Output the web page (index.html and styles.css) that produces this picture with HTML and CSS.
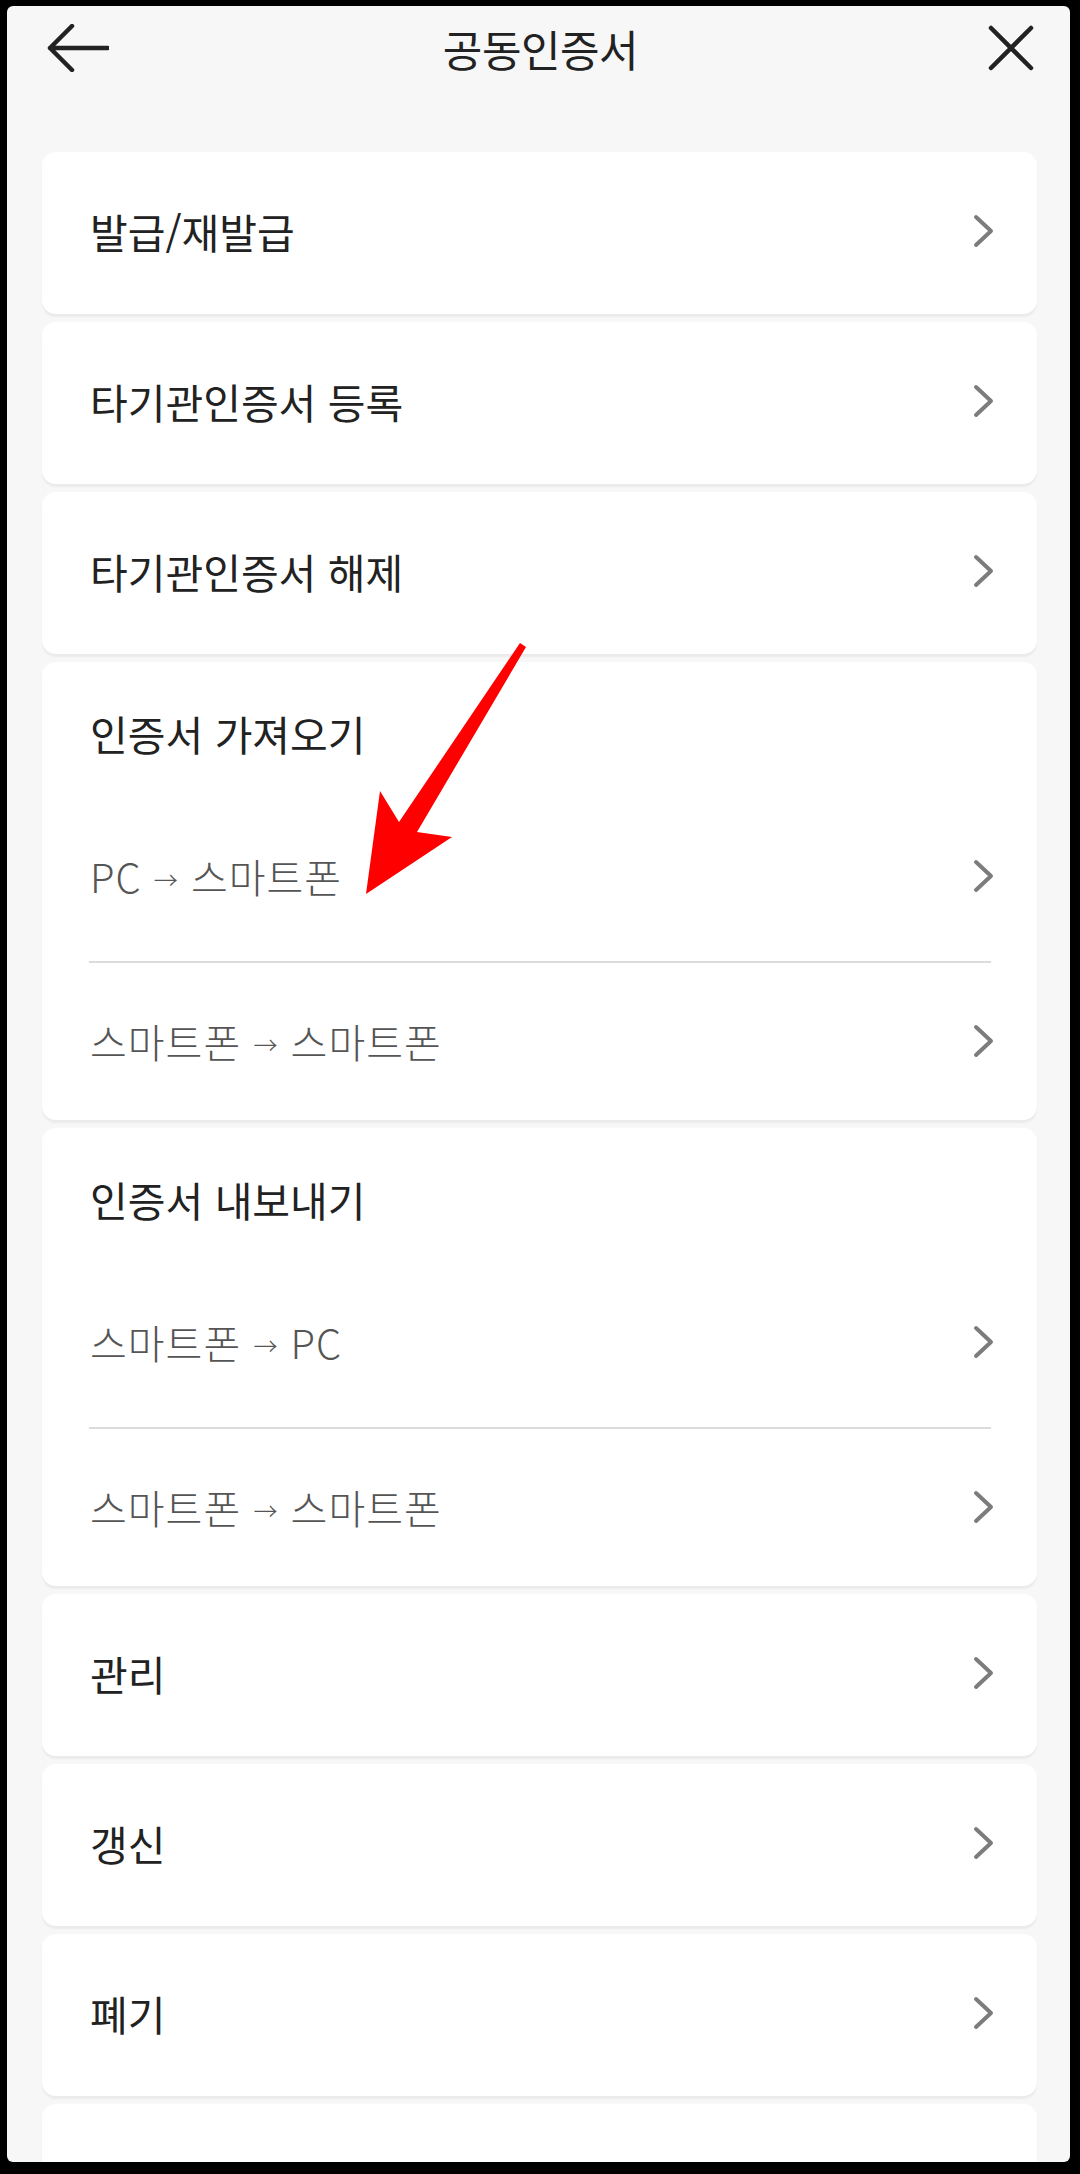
FILE: index.html
```html
<!DOCTYPE html>
<html lang="ko">

<head>
    <meta charset="UTF-8">
    <meta name="viewport" content="width=device-width, initial-scale=1.0">
    <title>공동인증서</title>
    <link rel="stylesheet" href="styles.css">
</head>

<body>
    <div class="screen">
        <!-- Top bar -->
        <div class="topbar">
            <div class="side">
                <svg class="icon" width="62" height="48" viewBox="0 0 62 48">
                    <path d="M25 2 L3 24 L25 46 M3 24 L61 24" />
                </svg>
            </div>
            <h1 class="title">공동인증서</h1>
            <div class="side right">
                <svg class="icon" width="46" height="46" viewBox="0 0 46 46">
                    <path d="M3 3 L43 43 M43 3 L3 43" />
                </svg>
            </div>
        </div>

        <div class="list">
            <div class="card">
                <div class="row"><span class="label">발급/재발급</span><svg class="chev" width="22" height="34" viewBox="0 0 22 34"><path d="M3 3 L18 17 L3 31" /></svg></div>
            </div>
            <div class="card">
                <div class="row"><span class="label">타기관인증서 등록</span><svg class="chev" width="22" height="34" viewBox="0 0 22 34"><path d="M3 3 L18 17 L3 31" /></svg></div>
            </div>
            <div class="card">
                <div class="row"><span class="label">타기관인증서 해제</span><svg class="chev" width="22" height="34" viewBox="0 0 22 34"><path d="M3 3 L18 17 L3 31" /></svg></div>
            </div>

            <div class="card group">
                <div class="group-title">인증서 가져오기</div>
                <div class="row sub first"><span class="label">PC <span class="arrow">→</span> 스마트폰</span><svg class="chev" width="22" height="34" viewBox="0 0 22 34"><path d="M3 3 L18 17 L3 31" /></svg></div>
                <div class="sep"></div>
                <div class="row sub last"><span class="label">스마트폰 <span class="arrow">→</span> 스마트폰</span><svg class="chev" width="22" height="34" viewBox="0 0 22 34"><path d="M3 3 L18 17 L3 31" /></svg></div>
            </div>

            <div class="card group">
                <div class="group-title">인증서 내보내기</div>
                <div class="row sub first"><span class="label">스마트폰 <span class="arrow">→</span> PC</span><svg class="chev" width="22" height="34" viewBox="0 0 22 34"><path d="M3 3 L18 17 L3 31" /></svg></div>
                <div class="sep"></div>
                <div class="row sub last"><span class="label">스마트폰 <span class="arrow">→</span> 스마트폰</span><svg class="chev" width="22" height="34" viewBox="0 0 22 34"><path d="M3 3 L18 17 L3 31" /></svg></div>
            </div>

            <div class="card">
                <div class="row"><span class="label">관리</span><svg class="chev" width="22" height="34" viewBox="0 0 22 34"><path d="M3 3 L18 17 L3 31" /></svg></div>
            </div>
            <div class="card">
                <div class="row"><span class="label">갱신</span><svg class="chev" width="22" height="34" viewBox="0 0 22 34"><path d="M3 3 L18 17 L3 31" /></svg></div>
            </div>
            <div class="card">
                <div class="row"><span class="label">폐기</span><svg class="chev" width="22" height="34" viewBox="0 0 22 34"><path d="M3 3 L18 17 L3 31" /></svg></div>
            </div>
            <div class="card"></div>
        </div>

        <!-- red annotation arrow drawn over the list -->
        <svg class="pointer" width="1080" height="2174" viewBox="0 0 1080 2174">
            <polygon points="520,643 526,647 417,832 452,837 366,894 380,791 399,822" />
        </svg>
    </div>
</body>

</html>
```

FILE: styles.css
```css
body {
    margin: 0;
    padding: 0;
    background-color: #000;
    font-family: "Noto Sans CJK KR", "Noto Sans", sans-serif;
}

.screen {
    position: relative;
    margin: 6px 10px 0 7px;
    height: 2156px;
    background-color: #f7f7f7;
    border-radius: 6px;
    overflow: hidden;
}

.topbar {
    display: flex;
    align-items: center;
    height: 84px;
    padding: 0 36px 0 40px;
}

.side {
    display: flex;
    width: 62px;
}

.side.right {
    justify-content: flex-end;
}

.icon {
    fill: none;
    stroke: #222;
    stroke-width: 4.5;
    stroke-linecap: round;
    stroke-linejoin: round;
}

.title {
    flex: 1;
    margin: 0;
    text-align: center;
    font-size: 43px;
    font-weight: 400;
    color: #222;
    letter-spacing: -0.5px;
}

.list {
    padding: 62px 33px 0 35px;
}

.card {
    background: #fff;
    border-radius: 14px;
    height: 162px;
    margin-bottom: 8px;
    box-shadow: 0 3px 2px rgba(0, 0, 0, 0.05);
}

.card.group {
    height: auto;
}

.row {
    display: flex;
    align-items: center;
    justify-content: space-between;
    box-sizing: border-box;
    height: 162px;
    padding: 0 42px 4px 48px;
}

.label {
    font-size: 41px;
    color: #222;
}

.group-title {
    font-size: 41px;
    color: #222;
    line-height: 46px;
    padding: 48px 48px 36px 48px;
}

.row.sub {
    padding-bottom: 2px;
}

.row.sub .label {
    font-size: 40px;
    color: #555;
    font-weight: 300;
    letter-spacing: 1px;
}

.row.first {
    height: 169px;
}

.row.last {
    height: 157px;
}

.arrow {
    font-size: 24px;
    vertical-align: 4px;
}

.sep {
    height: 2px;
    margin: 0 46px 0 47px;
    background-color: #dcdcdc;
}

.chev {
    fill: none;
    stroke: #7c7c7c;
    stroke-width: 4;
    stroke-linecap: round;
    stroke-linejoin: round;
}

.pointer {
    position: absolute;
    left: -7px;
    top: -6px;
    fill: #ff0000;
    pointer-events: none;
}
```
